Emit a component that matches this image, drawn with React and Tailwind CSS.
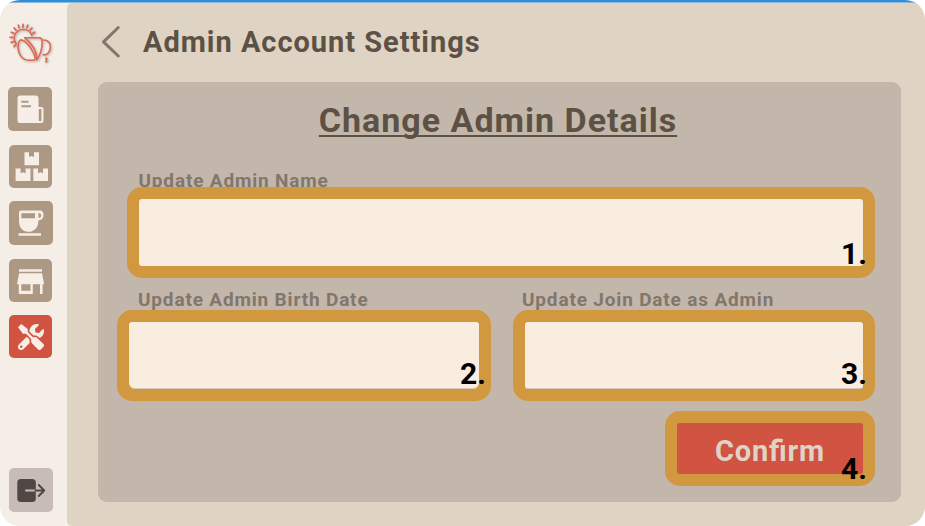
import React from "react";
import { FaTools } from "react-icons/fa";

function NavButton({ className = "", children }) {
  return (
    <button className={`shrink-0 overflow-hidden rounded-[5px] ${className}`}>
      {children}
    </button>
  );
}

function Glyph({ children }) {
  return <svg viewBox="0 0 44 44" className="block h-11 w-11 max-w-none" fill="none">{children}</svg>;
}

function Logo() {
  return (
    <svg viewBox="0 3 44 42" className="h-[42px] w-11 shrink-0 overflow-visible drop-shadow-[1px_1px_1px_rgba(90,60,50,0.4)]" fill="none" stroke="#d96b58" strokeWidth="1.600" strokeLinecap="round" strokeLinejoin="round">
      <path d="M7.200 25C2.500 18 7 10.800 13.700 10.500C18.500 10.400 21.800 13 22.800 16.500" />
      <path strokeWidth="1.800" d="M14 5.500v2.800M9.300 6.300l.9 2.500M18.800 6.300l-.9 2.500M5.200 9l1.800 2.100M22.900 9l-1.800 2.100M2.300 13.300l2.500 1.100M25.800 13.300l-2.400 1.300M1.200 18.300l2.600.1M2.200 23.300l2.300-.7M5 27.500l1.600-1.500" />
      <g transform="translate(-0.600 3.600)">
        <path d="M12.500 17.200C10 18 9.700 21 9.700 24.500C9.700 31.500 13.500 37.200 20 37.600H25.500C27.500 37.300 26.800 34 25.500 31C22.500 25 17.500 18 12.500 17.200Z" />
        <path d="M16.500 15.200H30.500C33 15.200 33.800 16.700 33.800 19C33.800 26 32 32.500 28.500 37" />
        <path d="M16.500 15.200C23 20.500 28.500 28 28.500 37" />
        <path d="M35.500 17.400C40.500 17.800 42.200 21 42 25C41.800 29.800 38.500 32.600 35 32.300" />
        <path d="M38 36v.5M37.800 38.800h.1" strokeWidth="2.400" />
      </g>
    </svg>
  );
}

function Sidebar() {
  return (
    <nav className="flex w-[67px] shrink-0 flex-col pt-[19px] pb-[14px] pl-[9px]">
      <Logo />
      <div className="-ml-px mt-[23px] flex flex-col">
        <NavButton className="h-11 w-11 bg-[#ad9983]">
          <Glyph>
            <path fill="#f6eee7" fillRule="evenodd" d="M12 8.500H27.500Q30.500 8.500 30.500 11.500V20H33.500Q35.500 20 35.500 22V33.500Q35.500 36 33 36H12Q9.500 36 9.500 33.500V11Q9.500 8.500 12 8.500ZM30.800 22V34H33.400V22ZM13.400 13.800V15.800H20.500V13.800ZM13.400 18.200V20.200H23V18.200Z" />
          </Glyph>
        </NavButton>
        <NavButton className="mt-[14px] ml-px h-[43px] w-[43px] bg-[#ad9983]">
          <Glyph>
            <path fill="#f6eee7" d="M15.500 7.300h4.500v4.700l2.500-1 2.500 1V7.300h5V20.300H15.500ZM6.600 23.500h5v4.700l2.500-1 2.500 1v-4.700h4.900V36H6.600ZM24.300 23.500h4.700v4.700l2.500-1 2.500 1v-4.700h5V36H24.300Z" />
          </Glyph>
        </NavButton>
        <NavButton className="mt-[13px] ml-px h-11 w-11 bg-[#ad9983]">
          <Glyph>
            <path fill="#f6eee7" fillRule="evenodd" d="M12 9.500H31Q34.500 9.500 34.500 14Q34.500 18.800 30 19.200H29.500C29.300 26.500 25.500 30.800 19.500 30.800C13.500 30.800 10 26.500 10 19.500V11.500Q10 9.500 12 9.500ZM12.400 12.200V17.300H26V12.200ZM29.500 12V17Q32.200 17 32.200 14.500T29.500 12Z" />
            <path fill="#f6eee7" d="M9.500 32.200h22.500v2.600H9.500Z" />
          </Glyph>
        </NavButton>
        <NavButton className="mt-[14px] ml-px h-[43px] w-[43px] bg-[#ad9983]">
          <Glyph>
            <path fill="#f6eee7" fillRule="evenodd" d="M10 10.300H33V12.800H10ZM10 14.300H33L35.200 25.300H33.600V35H31V25.300H23.800V35H9.800V25.300H8L10 14.300ZM12.300 25.300V31.800H21.500V25.300Z" />
          </Glyph>
        </NavButton>
        <NavButton className="mt-[13px] ml-px flex h-[43px] w-[43px] items-center justify-center bg-[#d15341]">
          <FaTools className="h-[26px] w-[26px] text-[#f6eee7]" />
        </NavButton>
      </div>
      <NavButton className="mt-auto h-11 w-11 bg-[#c8bcb6]">
        <Glyph>
          <rect x="8.300" y="11" width="18.500" height="23" rx="3.500" fill="#514745" />
          <path d="M17 22.500H27" stroke="#c8bcb6" strokeWidth="2" strokeLinecap="round" />
          <path d="M26.500 22.500H35.200M29.800 17 35.200 22.500 29.800 28" stroke="#514745" strokeWidth="2" strokeLinecap="round" strokeLinejoin="round" />
        </Glyph>
      </NavButton>
    </nav>
  );
}

function Frame({ number, className = "", numberClass = "", children }) {
  return (
    <div className={`relative rounded-[15px] border-[12px] border-[#d1983f] bg-[#d1983f] ${className}`}>
      {children}
      <span className={`absolute text-[30px] leading-9 font-bold text-black ${numberClass}`}>{number}</span>
    </div>
  );
}

function Label({ children }) {
  return <label className="block h-6 text-[19px] leading-6 font-bold tracking-[0.830px] whitespace-nowrap text-[#83766a]">{children}</label>;
}

function Input({ className = "" }) {
  return <input className={`block h-full w-full rounded-[3px] bg-[#f9ede0] outline-none ${className}`} />;
}

export default function App() {
  return (
    <div className="h-[526px] w-[925px] overflow-hidden bg-white font-['Roboto',sans-serif]">
      <div className="flex h-full flex-col overflow-hidden rounded-[20px] bg-[#f5eee7]">
        <div className="h-[3px] shrink-0 border-b border-[#8fb9d8] bg-[#2b8fdb]" />
        <div className="flex min-h-0 flex-1">
          <Sidebar />
          <main className="flex flex-1 flex-col rounded-l-[5px] bg-[#dfd3c3] pt-[19px] pr-6 pl-[31px]">
            <header className="flex h-10 items-center">
              <svg viewBox="0 0 24 40" className="h-10 w-6" fill="none" stroke="#83766a" strokeWidth="3" strokeLinecap="round" strokeLinejoin="round">
                <path d="M20.300 5.500 5.500 19.800 20.300 34" />
              </svg>
              <h1 className="ml-[21px] text-[29px] leading-10 font-bold tracking-[0.970px] whitespace-nowrap text-[#5d5145]">Admin Account Settings</h1>
            </header>
            <section className="mt-5 flex h-[420px] flex-col rounded-[9px] bg-[#c2b7aa] pt-[18px]">
              <h2 className="mr-[3px] h-10 text-center text-[34px] leading-10 font-bold tracking-[1px] whitespace-nowrap text-[#5d5145] underline decoration-[1.5px] underline-offset-[3px] [text-decoration-skip-ink:none]">Change Admin Details</h2>
              <div className="mt-[29px] ml-[29px] w-[748px]">
                <div className="pl-[11.5px]"><Label>Update Admin Name</Label></div>
                <Frame number="1." className="-mt-[6px] h-[91px]" numberClass="right-[-4px] bottom-[-6px]"><Input /></Frame>
              </div>
              <div className="mt-[10px] ml-[19px] flex gap-[22px]">
                <div className="w-[374px]">
                  <div className="pl-[21px]"><Label>Update Admin Birth Date</Label></div>
                  <Frame number="2." className="-mt-[2px] h-[91px]" numberClass="right-[-7px] bottom-[-3px]"><Input className="rounded-b-[6px] border-b border-[#d3c9be]" /></Frame>
                </div>
                <div className="w-[362px]">
                  <div className="pl-[9px]"><Label>Update Join Date as Admin</Label></div>
                  <Frame number="3." className="-mt-[2px] h-[91px]" numberClass="right-[-4px] bottom-[-3px]"><Input className="border-b border-[#d3c9be]" /></Frame>
                </div>
              </div>
              <Frame number="4." className="mt-[10px] mr-[26px] h-[75px] w-[210px] shrink-0 self-end" numberClass="right-[-4px] bottom-[-13px]">
                <button className="flex h-full w-full items-center justify-center rounded-[3px] bg-[#d15341] pt-[5px] text-[29px] leading-9 font-bold tracking-[0.850px] text-[#dfd3c7] [font-feature-settings:'liga'_1]">Confirm</button>
              </Frame>
            </section>
          </main>
        </div>
      </div>
    </div>
  );
}
